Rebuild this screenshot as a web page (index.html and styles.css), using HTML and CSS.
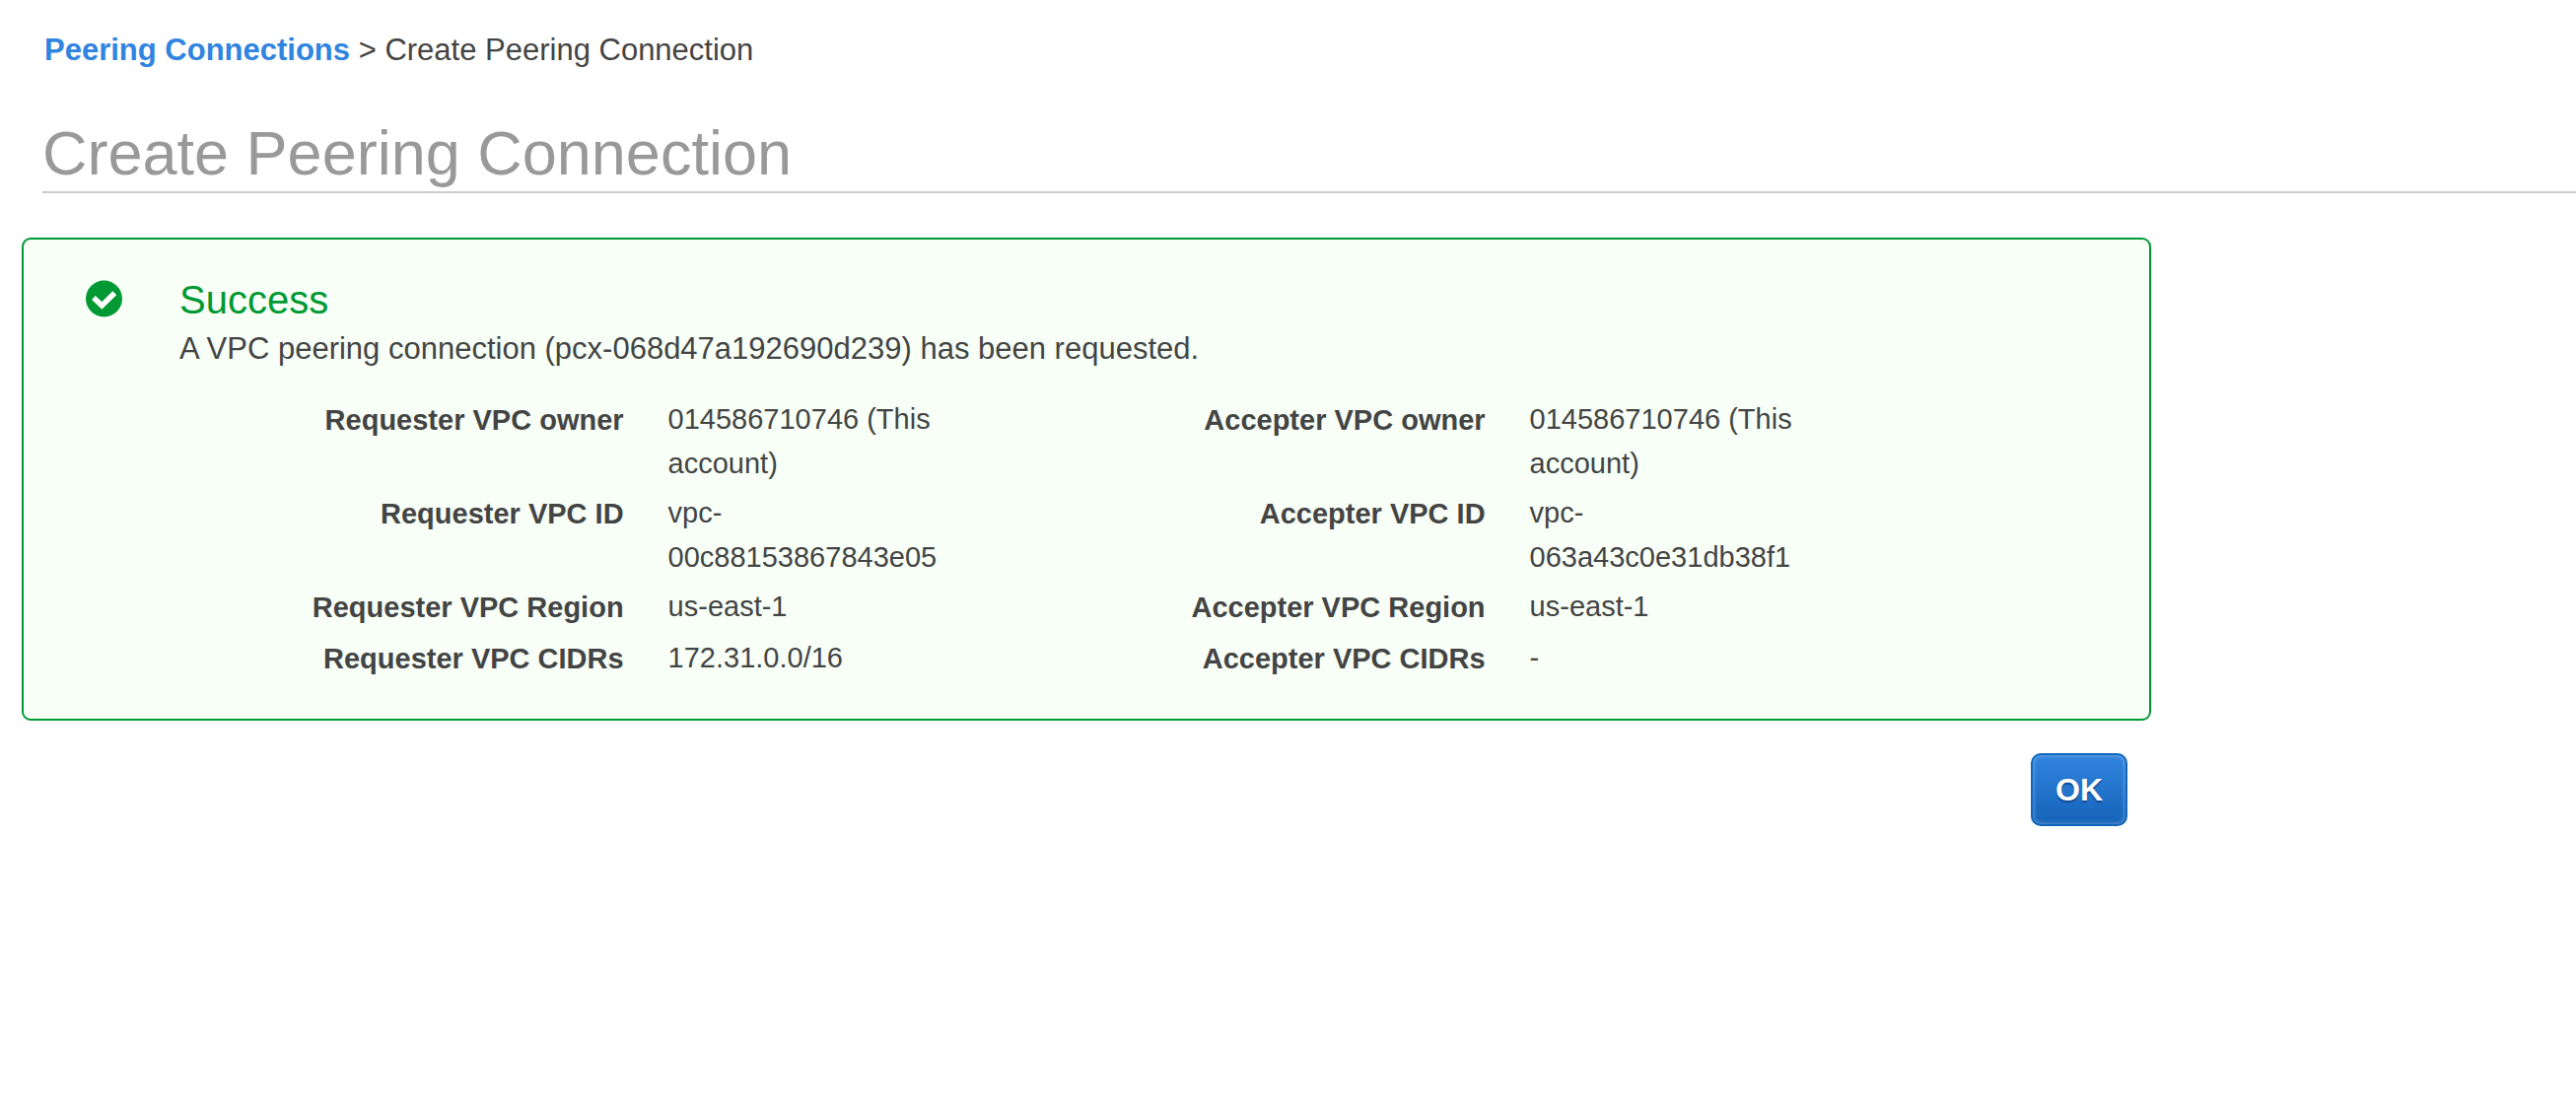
FILE: index.html
```html
<!DOCTYPE html>
<html lang="en">
<head>
<meta charset="utf-8">
<title>Create Peering Connection</title>
<link rel="stylesheet" href="styles.css">
</head>
<body>
<header class="page-header">
  <nav class="breadcrumb" aria-label="Breadcrumb"><a href="#">Peering Connections</a> &gt; Create Peering Connection</nav>
  <h1 class="page-title">Create Peering Connection</h1>
</header>
<main class="content">
  <section class="alert">
    <svg class="alert-icon" viewBox="0 0 38 38" aria-hidden="true">
      <circle cx="18.5" cy="19" r="18.5" fill="#093"/>
      <path d="M8 18l8.3 8L29.3 13.3" fill="none" stroke="#fff" stroke-width="5.4" stroke-linejoin="miter"/>
    </svg>
    <div class="alert-body">
      <h2 class="alert-title">Success</h2>
      <p class="alert-message">A VPC peering connection (pcx-068d47a192690d239) has been requested.</p>
      <div class="details">
        <dl class="detail-list">
          <dt>Requester VPC owner</dt><dd>014586710746 (This account)</dd>
          <dt>Requester VPC ID</dt><dd>vpc-00c88153867843e05</dd>
          <dt>Requester VPC Region</dt><dd>us-east-1</dd>
          <dt>Requester VPC CIDRs</dt><dd>172.31.0.0/16</dd>
        </dl>
        <dl class="detail-list">
          <dt>Accepter VPC owner</dt><dd>014586710746 (This account)</dd>
          <dt>Accepter VPC ID</dt><dd>vpc-063a43c0e31db38f1</dd>
          <dt>Accepter VPC Region</dt><dd>us-east-1</dd>
          <dt>Accepter VPC CIDRs</dt><dd>-</dd>
        </dl>
      </div>
    </div>
  </section>
  <div class="actions"><button class="button-primary" type="button">OK</button></div>
</main>
</body>
</html>
```
FILE: styles.css
```css
* { box-sizing: border-box; }

body {
  margin: 0;
  background: #fff;
  color: #444;
  font-family: "Liberation Sans", Arial, sans-serif;
  font-size: 31px;
  line-height: 48px;
}

.page-header { padding: 27px 0 0 43px; }

.breadcrumb { padding-left: 2px; }

.breadcrumb a {
  color: #3184df;
  font-weight: bold;
  text-decoration: none;
}

.page-title {
  margin: 43px 0 0;
  padding-bottom: 2px;
  border-bottom: 2px solid #ccc;
  color: #999;
  font-size: 63px;
  font-weight: normal;
  line-height: 74px;
}

.content {
  max-width: 2182px;
  padding: 45px 0 0 22px;
}

.alert {
  display: flex;
  align-items: flex-start;
  gap: 57px;
  padding: 37px 250px 37px 63px;
  border: 2px solid #093;
  border-radius: 9px;
  background: #f7fff7;
}

.alert-icon {
  flex: none;
  width: 38px;
  height: 38px;
  margin-top: 4px;
}

.alert-body { flex: 1; }

.alert-title {
  margin: 0 0 2px;
  color: #093;
  font-size: 40px;
  font-weight: normal;
  line-height: 48px;
}

.alert-message { margin: 0 0 25px; }

.details {
  display: grid;
  grid-template-columns: 1fr 1fr;
  font-size: 29px;
  line-height: 45px;
}

.detail-list {
  display: grid;
  grid-template-columns: 3fr 2fr;
  gap: 5px 45px;
  margin: 0;
  padding-right: 78px;
}

.detail-list dt {
  padding: 1px 0;
  font-weight: bold;
  text-align: right;
}

.detail-list dd { margin: 0; }

.actions {
  display: flex;
  justify-content: flex-end;
  padding: 33px 24px 0 0;
}

.button-primary {
  padding: 11px 23px;
  border: 2px solid #16b;
  border-radius: 10px;
  background: linear-gradient(#3184df, #1563b8) border-box;
  box-shadow: inset 0 0 5px rgba(255, 255, 255, 0.4);
  color: #fff;
  font: bold 32px/48px "Liberation Sans", Arial, sans-serif;
  text-shadow: 0 2px 1px rgba(0, 30, 90, 0.5);
}
```
